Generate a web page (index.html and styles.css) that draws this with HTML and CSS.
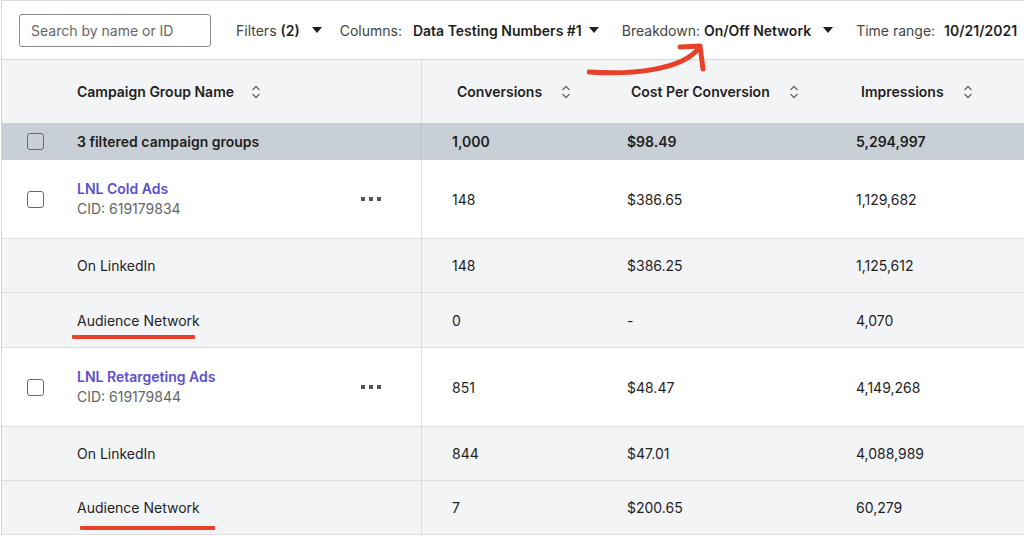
FILE: index.html
```html
<!DOCTYPE html>
<html>
<head>
<meta charset="utf-8">
<link rel="stylesheet" href="styles.css">
</head>
<body>
<div class="page">
  <div class="toolbar">
    <div class="search">Search by name or ID</div>
    <div class="tool"><span class="lbl">Filters</span><b class="val v-filter">(2)</b><span class="caret"></span></div>
    <div class="tool t-cols"><span class="lbl">Columns:</span><b class="val v-cols">Data Testing Numbers #1</b><span class="caret tight"></span></div>
    <div class="tool t-break"><span class="lbl">Breakdown:</span><b class="val v-break">On/Off Network</b><span class="caret"></span></div>
    <div class="tool"><span class="lbl">Time range:</span><b class="val v-time">10/21/2021</b></div>
  </div>

  <div class="table">
    <div class="row head">
      <div class="c0"></div>
      <div class="c1"><span class="htxt">Campaign Group Name</span><svg class="sort" viewBox="0 0 10 14"><path d="M1.5 5 L5 1.5 L8.5 5 M1.5 9 L5 12.5 L8.5 9" fill="none" stroke="#6b6b6b" stroke-width="1.4"/></svg></div>
      <div class="c2"><span class="htxt">Conversions</span><svg class="sort" viewBox="0 0 10 14"><path d="M1.5 5 L5 1.5 L8.5 5 M1.5 9 L5 12.5 L8.5 9" fill="none" stroke="#6b6b6b" stroke-width="1.4"/></svg></div>
      <div class="c3"><span class="htxt">Cost Per Conversion</span><svg class="sort" viewBox="0 0 10 14"><path d="M1.5 5 L5 1.5 L8.5 5 M1.5 9 L5 12.5 L8.5 9" fill="none" stroke="#6b6b6b" stroke-width="1.4"/></svg></div>
      <div class="c4"><span class="htxt">Impressions</span><svg class="sort" viewBox="0 0 10 14"><path d="M1.5 5 L5 1.5 L8.5 5 M1.5 9 L5 12.5 L8.5 9" fill="none" stroke="#6b6b6b" stroke-width="1.4"/></svg></div>
    </div>

    <div class="row summary">
      <div class="c0"><span class="check"></span></div>
      <div class="c1">3 filtered campaign groups</div>
      <div class="c2">1,000</div>
      <div class="c3">$98.49</div>
      <div class="c4">5,294,997</div>
    </div>

    <div class="row main">
      <div class="c0"><span class="check"></span></div>
      <div class="c1"><div class="name"><span class="link">LNL Cold Ads</span><span class="cid">CID: 619179834</span></div><span class="dots"><i></i><i></i><i></i></span></div>
      <div class="c2">148</div>
      <div class="c3">$386.65</div>
      <div class="c4">1,129,682</div>
    </div>

    <div class="row sub">
      <div class="c0"></div>
      <div class="c1">On LinkedIn</div>
      <div class="c2">148</div>
      <div class="c3">$386.25</div>
      <div class="c4">1,125,612</div>
    </div>

    <div class="row sub h55">
      <div class="c0"></div>
      <div class="c1"><span class="marked">Audience Network<span class="uline u1"></span></span></div>
      <div class="c2">0</div>
      <div class="c3">-</div>
      <div class="c4">4,070</div>
    </div>

    <div class="row main">
      <div class="c0"><span class="check"></span></div>
      <div class="c1"><div class="name"><span class="link">LNL Retargeting Ads</span><span class="cid">CID: 619179844</span></div><span class="dots"><i></i><i></i><i></i></span></div>
      <div class="c2">851</div>
      <div class="c3">$48.47</div>
      <div class="c4">4,149,268</div>
    </div>

    <div class="row sub">
      <div class="c0"></div>
      <div class="c1">On LinkedIn</div>
      <div class="c2">844</div>
      <div class="c3">$47.01</div>
      <div class="c4">4,088,989</div>
    </div>

    <div class="row sub">
      <div class="c0"></div>
      <div class="c1"><span class="marked">Audience Network<span class="uline u2"></span></span></div>
      <div class="c2">7</div>
      <div class="c3">$200.65</div>
      <div class="c4">60,279</div>
    </div>
  </div>

  <svg class="arrow" viewBox="0 0 130 40" width="130" height="40">
    <path d="M2 32 C 45 35, 95 30, 112 8" fill="none" stroke="#e8412a" stroke-width="5" stroke-linecap="round"/>
    <path d="M93 7 L113 6 L116 29" fill="none" stroke="#e8412a" stroke-width="5" stroke-linecap="round" stroke-linejoin="round"/>
  </svg>
</div>
</body>
</html>
```

FILE: styles.css
```css
html, body {
  margin: 0;
  padding: 0;
  background: #ffffff;
  overflow: hidden;
}

body {
  font-family: "Inter", "Roboto", "Liberation Sans", sans-serif;
  font-size: 14px;
  color: #1f1f1f;
  width: 1024px;
  height: 537px;
}

.page {
  position: relative;
  margin-left: 1px;
  border-left: 1px solid #d5d5d5;
  width: 1022px;
  overflow: hidden;
}

.toolbar {
  height: 58px;
  border-top: 1px solid #dadada;
  border-bottom: 1px solid #dadada;
  display: flex;
  align-items: center;
  white-space: nowrap;
  padding-left: 17px;
  overflow: hidden;
}

.search {
  box-sizing: border-box;
  flex: none;
  width: 192px;
  height: 33px;
  border: 1px solid #8a8a8a;
  border-radius: 3px;
  padding-left: 11px;
  line-height: 31px;
  color: #666;
  font-size: 14px;
  margin-right: 25px;
}

.tool {
  display: flex;
  flex: none;
  align-items: center;
  margin-right: 18px;
  color: #444;
}

.tool.t-cols,
.tool.t-break {
  margin-right: 23px;
}

.tool .val {
  font-weight: 600;
  color: #1f1f1f;
}

.tool .v-filter { margin-left: 4px; }
.tool .v-cols { margin-left: 11px; }
.tool .v-break { margin-left: 4px; }
.tool .v-time { margin-left: 9px; }

.caret {
  display: inline-block;
  width: 0;
  height: 0;
  border-left: 5.5px solid transparent;
  border-right: 5.5px solid transparent;
  border-top: 6px solid #1f1f1f;
  margin-left: 12px;
}

.caret.tight {
  margin-left: 7px;
}

.table {
  width: 100%;
}

.row {
  display: grid;
  grid-template-columns: 60px 359px 179px 229px 1fr;
  box-sizing: border-box;
}

.row > div {
  display: flex;
  align-items: center;
  box-sizing: border-box;
  white-space: nowrap;
}

.c0 { padding-left: 25px; }
.c1 { padding-left: 15px; padding-right: 40px; }
.c2 { padding-left: 30px; border-left: 1px solid #dcdcdc; }
.c3 { padding-left: 27px; }
.c4 { padding-left: 27px; }

.head {
  height: 63px;
  background: #f3f4f6;
  font-weight: 600;
  color: #1f1f1f;
}

.head .c2 { padding-left: 35px; }
.head .c3 { padding-left: 31px; }
.head .c4 { padding-left: 32px; }

.sort {
  width: 10px;
  height: 14px;
  margin-left: 19px;
}

.head .c1 .sort { margin-left: 17px; }

.summary {
  height: 37px;
  background: #c9cfd6;
  font-weight: 600;
}

.summary .c2 { border-left-color: #bfc5cc; }

.check {
  display: inline-block;
  box-sizing: border-box;
  width: 17px;
  height: 17px;
  border: 1.5px solid #6a6a6a;
  border-radius: 3px;
  background: transparent;
}

.main {
  height: 79px;
  background: #ffffff;
  border-bottom: 1px solid #dedfe1;
}

.main .c1 {
  justify-content: space-between;
}

.name {
  display: flex;
  flex-direction: column;
  line-height: 20px;
  margin-top: -1px;
}

.link {
  color: #5b50cf;
  font-weight: 600;
}

.cid {
  color: #666;
}

.dots {
  display: flex;
  gap: 4px;
}

.dots i {
  display: block;
  width: 4px;
  height: 4px;
  background: #555;
}

.sub {
  height: 54px;
  background: #f3f4f6;
  border-bottom: 1px solid #dedfe1;
}

.sub.h55 {
  height: 55px;
}

.marked {
  position: relative;
}

.uline {
  position: absolute;
  height: 4px;
  background: #e8412a;
  border-radius: 1px;
}

.u1 {
  left: -5px;
  width: 123px;
  top: 23px;
}

.u2 {
  left: 3px;
  width: 135px;
  top: 27px;
}

.arrow {
  position: absolute;
  left: 585px;
  top: 40px;
}
```
